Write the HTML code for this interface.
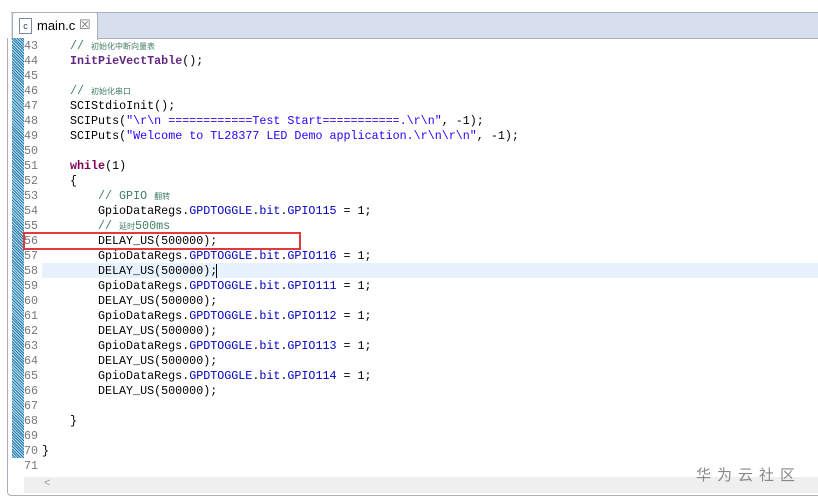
<!DOCTYPE html><html><head><meta charset="utf-8"><style>
body{margin:0;width:818px;height:501px;background:#fff;position:relative;overflow:hidden;font-family:"Liberation Mono",monospace}
.top{position:absolute;left:0;top:0;width:818px;height:12px;background:#fff}
.tabbar{position:absolute;left:11px;top:12px;width:807px;height:25px;background:#d7dfee;border-top:1px solid #a9b0bb;border-bottom:1px solid #a9b0bb}
.tab{position:absolute;left:12px;top:12px;width:84px;height:27px;background:#fff;border:1px solid #a9b0bb;border-bottom:none;border-radius:3px 3px 0 0;font:13px "Liberation Sans",sans-serif}
.frame{position:absolute;left:7px;top:38px;width:811px;height:457px;border-left:1px solid #a9b0bb;border-bottom:1px solid #a9b0bb;border-radius:0 0 0 4px}
.gut{position:absolute;left:12px;top:38px;width:12px;height:420px;background-color:#7ab4d0;background-image:repeating-linear-gradient(45deg,#2a7fb0 0 1px,#b8dcea 1px 2px)}
.l{position:absolute;left:0;height:15px;line-height:15px;font-size:11.7px;white-space:pre;color:#000}
.n{position:absolute;left:24px;color:#787878;font-size:11.7px;line-height:15px}
.c{color:#3f7f5f}.p{color:#7f0055;font-weight:bold}.b{color:#0000c0}.s{color:#2a00ff}.f{color:#642880;font-weight:bold}
.cj{font-family:"Noto Sans CJK SC",sans-serif;font-size:8px}
</style></head><body>
<div class="top"></div>
<div class="tabbar"></div>
<div class="tab"><span style="position:absolute;left:6px;top:5px;width:11px;height:14px;border:1px solid #7a8aa0;font-size:9px;line-height:14px;text-align:center;color:#345">c</span><span style="position:absolute;left:24px;top:5px">main.c</span><span style="position:absolute;left:66px;top:4px;color:#777">☒</span></div>
<div class="frame"></div>
<div style="position:absolute;left:42px;top:263px;width:776px;height:15px;background:#e8f2fe"></div>
<div class="gut"></div>
<div id="code"></div>
<div style="position:absolute;left:23px;top:232px;width:274px;height:14px;border:2px solid #e03c3c"></div>
<div style="position:absolute;left:216px;top:264px;width:1px;height:14px;background:#000"></div>
<div style="position:absolute;left:24px;top:477px;width:794px;height:16px;background:#efefef"></div>
<div style="position:absolute;left:44px;top:478px;color:#999;font-size:11px">&lt;</div>
<div style="position:absolute;left:696px;top:464px;color:#888;font:15px 'Noto Sans CJK SC',sans-serif;letter-spacing:6px">华为云社区</div>
<script>
var L=[
['','<span class="c">// <span class="cj">初始化中断向量表</span></span>',70],
['','<span class="f">InitPieVectTable</span>();',70],['','',70],
['','<span class="c">// <span class="cj">初始化串口</span></span>',70],
['','SCIStdioInit();',70],
['','SCIPuts(<span class="s">"\\r\\n ============Test Start===========.\\r\\n"</span>, -1);',70],
['','SCIPuts(<span class="s">"Welcome to TL28377 LED Demo application.\\r\\n\\r\\n"</span>, -1);',70],
['','',70],['','<span class="p">while</span>(1)',70],['','{',70],
['','<span class="c">// GPIO <span class="cj">翻转</span></span>',98],
['','GpioDataRegs.<span class="b">GPDTOGGLE</span>.<span class="b">bit</span>.<span class="b">GPIO115</span> = 1;',98],
['','<span class="c">// <span class="cj">延时</span>500ms</span>',98],
['','DELAY_US(500000);',98],
['','GpioDataRegs.<span class="b">GPDTOGGLE</span>.<span class="b">bit</span>.<span class="b">GPIO116</span> = 1;',98],
['','DELAY_US(500000);',98],
['','GpioDataRegs.<span class="b">GPDTOGGLE</span>.<span class="b">bit</span>.<span class="b">GPIO111</span> = 1;',98],
['','DELAY_US(500000);',98],
['','GpioDataRegs.<span class="b">GPDTOGGLE</span>.<span class="b">bit</span>.<span class="b">GPIO112</span> = 1;',98],
['','DELAY_US(500000);',98],
['','GpioDataRegs.<span class="b">GPDTOGGLE</span>.<span class="b">bit</span>.<span class="b">GPIO113</span> = 1;',98],
['','DELAY_US(500000);',98],
['','GpioDataRegs.<span class="b">GPDTOGGLE</span>.<span class="b">bit</span>.<span class="b">GPIO114</span> = 1;',98],
['','DELAY_US(500000);',98],['','',70],['','}',70],['','',70],['','}',42],['','',70]];
var h='';for(var i=0;i<L.length;i++){var y=39+i*15;h+='<div class="n" style="top:'+y+'px">'+(43+i)+'</div><div class="l" style="top:'+y+'px;left:'+L[i][2]+'px">'+L[i][1]+'</div>';}
document.getElementById('code').innerHTML=h;
</script>
</body></html>
